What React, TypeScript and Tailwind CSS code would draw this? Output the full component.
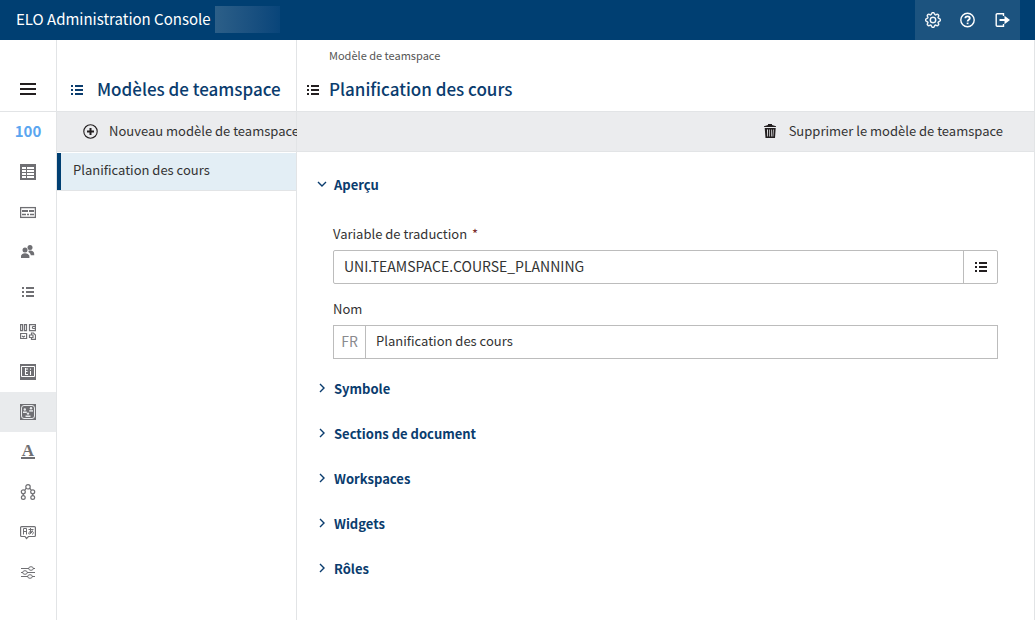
import { ReactNode, useState } from "react";
import { BsGear } from "react-icons/bs";
import clsx from "clsx";

function ListIcon() {
  return (
    <svg
      width="12"
      height="10"
      viewBox="0 0 12 10"
      fill="currentColor"
      shapeRendering="crispEdges"
      className="shrink-0"
      aria-hidden="true"
    >
      <path d="M0 0h2v2H0zM4 0h8v2H4zM0 4h2v2H0zM4 4h8v2H4zM0 8h2v2H0zM4 8h8v2H4z" />
    </svg>
  );
}

function NavSvg({ children }: { children: ReactNode }) {
  return (
    <svg
      width="16"
      height="16"
      viewBox="0 0 16 16"
      fill="none"
      stroke="currentColor"
      aria-hidden="true"
    >
      {children}
    </svg>
  );
}

function MenuIcon() {
  return (
    <svg
      width="16"
      height="12"
      viewBox="0 0 16 12"
      fill="currentColor"
      shapeRendering="crispEdges"
      aria-hidden="true"
    >
      <path d="M0 0h16v2H0zM0 5h16v2H0zM0 10h16v2H0z" />
    </svg>
  );
}

function TableIcon() {
  return (
    <NavSvg>
      <path
        fill="currentColor"
        stroke="none"
        fillRule="evenodd"
        d="M0 0h16v16H0zM2 3h4v2H2zM7 3h7v2H7zM2 6h4v2H2zM7 6h7v2H7zM2 9h4v2H2zM7 9h7v2H7zM2 12h4v2H2zM7 12h7v2H7z"
      />
    </NavSvg>
  );
}

function FieldsIcon() {
  return (
    <NavSvg>
      <rect x="0.6" y="3.6" width="14.8" height="9.8" strokeWidth="1.3" />
      <path strokeWidth="2" d="M2 7h6M9 7h5" />
      <path strokeWidth="1.6" d="M2 10.5h4M7 10.5h2M10 10.5h4" />
    </NavSvg>
  );
}

function UsersIcon() {
  return (
    <NavSvg>
      <g fill="currentColor" stroke="none">
        <circle cx="10" cy="3.4" r="2.5" />
        <path d="M8.6 6.8c3-.9 5.6.6 5.6 3v1.4h-3.4c-.3-1.4-1.2-2.5-2.5-3.1.3-.4.4-.8.3-1.3z" />
        <circle cx="5" cy="6" r="2.5" />
        <path d="M1 14v-1.5c0-2 1.7-3.3 4-3.3s4.4 1.3 4.4 3.3V14z" />
      </g>
    </NavSvg>
  );
}

function BlocksIcon() {
  return (
    <NavSvg>
      <g strokeWidth="1.2">
        <path d="M.6.6h2v6h-2zM4.5.6h2v6h-2zM9.5.6h5.9v6H9.5zM12.5 2.5h3M12.5 4.5h3M12.5 2.5v2" />
        <path d="M.6 9.5h6v5h-6zM2 12l1.5 1L5 12" />
        <path d="M11.5 11V9h2l2 2v4.4h-4v-2M13 11H9.5v2.5H13z" />
      </g>
    </NavSvg>
  );
}

function IndexIcon() {
  return (
    <NavSvg>
      <path fill="currentColor" stroke="none" d="M0 0h16v16H0z" />
      <path stroke="#fff" d="M1.5 2.5h13v10h-13z" />
      <path stroke="#fff" d="M5.5 4v7M6 5h2M6 7.5h1.5M6 10.5h2M10.5 7v4M10.5 4.5v1.3" />
    </NavSvg>
  );
}

function TeamspaceIcon() {
  return (
    <NavSvg>
      <path fill="currentColor" stroke="none" d="M0 0h16v16H0z" />
      <rect x="1.5" y="1.5" width="13" height="13" rx="2.5" stroke="#e9ebed" />
      <g fill="#e9ebed" stroke="none">
        <circle cx="4.8" cy="5.5" r="1.2" />
        <path d="M3 9V7.5h3.8V9z" />
        <circle cx="11" cy="4.2" r="1.2" />
        <path d="M9.2 7.6V6.2H13v1.4z" />
        <circle cx="8" cy="9.6" r="1.2" />
        <path d="M5.5 13v-1.5h5V13z" />
      </g>
    </NavSvg>
  );
}

function TreeIcon() {
  return (
    <NavSvg>
      <g strokeWidth="1.2">
        <circle cx="8" cy="2.8" r="2.2" />
        <circle cx="3.3" cy="7.8" r="2" />
        <circle cx="12.7" cy="7.8" r="2" />
        <circle cx="3.3" cy="13.5" r="1.9" />
        <circle cx="12.7" cy="13.5" r="1.9" />
        <path d="M6.3 4.2 4.8 6.2M9.7 4.2l1.5 2M3.3 9.8v1.7M12.7 9.8v1.7" />
      </g>
    </NavSvg>
  );
}

function TranslateIcon() {
  return (
    <NavSvg>
      <path
        strokeWidth="1.2"
        d="M1.6 2.6h12.8a1 1 0 0 1 1 1v7.900a1 1 0 0 1-1 1H8.500L6.500 14.500 5 12.500H1.600a1 1 0 0 1-1-1V3.600a1 1 0 0 1 1-1z"
      />
      <path d="M3.5 10.5v-6h3v6M3.5 7.5h3" />
      <path d="M8.5 5.5h5M10.5 4v5.5M12.5 6.500c-.5 2-2 3.500-3.300 3.500-1.200 0-.6-2.500 2-2.700 2.700-.2 2.800 2.600.8 3" />
    </NavSvg>
  );
}

function SlidersIcon() {
  return (
    <NavSvg>
      <path d="M1 4.5h8M13 4.5h2M1 8.5h2M7 8.5h8M1 12.5h7M12 12.5h3" />
      <ellipse cx="11" cy="4.5" rx="2.3" ry="1.8" />
      <ellipse cx="5" cy="8.5" rx="2.3" ry="1.8" />
      <ellipse cx="10" cy="12.5" rx="2.3" ry="1.8" />
    </NavSvg>
  );
}

function FontIcon() {
  return (
    <span className="w-[14px] border-b-2 border-current text-center font-['Liberation_Serif',serif] text-[17px] leading-[12px] font-bold">
      A
    </span>
  );
}

function HelpIcon() {
  return (
    <svg width="16" height="16" viewBox="0 0 16 16" fill="none" stroke="currentColor" aria-hidden="true">
      <circle cx="7.5" cy="8" r="6.7" strokeWidth="1.4" />
      <path strokeWidth="1.8" d="M5.3 6.3c0-2.7 4.5-2.6 4.500-.1 0 1.500-2.200 1.500-2.200 3.200" />
      <path strokeWidth="1.8" d="M7.6 10.6v1.6" />
    </svg>
  );
}

function LogoutIcon() {
  return (
    <svg width="16" height="16" viewBox="0 0 16 16" fill="none" stroke="currentColor" aria-hidden="true">
      <path strokeWidth="1.4" d="M8.5 4V1.700H2.200a1 1 0 0 0-1 1v10.600a1 1 0 0 0 1 1h6.300V12" />
      <path strokeWidth="2" d="M4.5 8h7" />
      <path fill="currentColor" stroke="none" d="M9.5 3.8 15 8l-5.5 4.2z" />
    </svg>
  );
}

function AddIcon() {
  return (
    <svg
      width="16"
      height="16"
      viewBox="0 0 16 16"
      fill="none"
      stroke="#231f20"
      className="shrink-0"
      aria-hidden="true"
    >
      <circle cx="8.5" cy="8.5" r="6.7" strokeWidth="1.1" />
      <path strokeWidth="2" d="M8.5 5v7M5 8.5h7" />
    </svg>
  );
}

function TrashIcon() {
  return (
    <svg width="14" height="14" viewBox="0 0 14 14" fill="#231f20" aria-hidden="true">
      <path d="M1 2.2 5 1V0h4v1l4 1.2V3H1z" />
      <path
        fillRule="evenodd"
        d="M1.7 4h11L12 14H2.5zM4 5.5l.3 7h.7v-7zM6 5.5v7h.7v-7zM8 5.5v7h.7v-7zM10 5.5l-.4 7h.7l.4-7z"
      />
    </svg>
  );
}

function Chevron({ open }: { open: boolean }) {
  return (
    <svg
      width="10"
      height="12"
      viewBox="0 0 10 12"
      fill="none"
      stroke="currentColor"
      strokeWidth="1.4"
      className="shrink-0"
      aria-hidden="true"
    >
      <path d={open ? "M1 3l4 4 4-4" : "M3 1l4 4-4 4"} />
    </svg>
  );
}

const navItems: { label: string; icon: ReactNode }[] = [
  {
    label: "100",
    icon: <span className="pb-0.5 text-[15px] leading-5 font-bold text-[#5aa5f0]">100</span>,
  },
  { label: "Masques", icon: <TableIcon /> },
  { label: "Champs", icon: <FieldsIcon /> },
  { label: "Utilisateurs", icon: <UsersIcon /> },
  { label: "Listes", icon: <ListIcon /> },
  { label: "Modules", icon: <BlocksIcon /> },
  { label: "Index", icon: <IndexIcon /> },
  { label: "Teamspaces", icon: <TeamspaceIcon /> },
  { label: "Polices", icon: <FontIcon /> },
  { label: "Structure", icon: <TreeIcon /> },
  { label: "Traductions", icon: <TranslateIcon /> },
  { label: "Options", icon: <SlidersIcon /> },
];

const sections = ["Symbole", "Sections de document", "Workspaces", "Widgets", "Rôles"];

function Section({
  title,
  defaultOpen = false,
  children,
}: {
  title: string;
  defaultOpen?: boolean;
  children?: ReactNode;
}) {
  const [open, setOpen] = useState(defaultOpen);

  return (
    <section>
      <button
        type="button"
        aria-expanded={open}
        onClick={() => setOpen(!open)}
        className="flex h-6 items-center gap-[7px] font-bold text-[#0a3c6e]"
      >
        <Chevron open={open} />
        {title}
      </button>
      {open && children}
    </section>
  );
}

export default function App() {
  const [selected, setSelected] = useState("Teamspaces");
  const [variable, setVariable] = useState("UNI.TEAMSPACE.COURSE_PLANNING");
  const [name, setName] = useState("Planification des cours");

  return (
    <div className="flex min-h-screen flex-col bg-white font-['Noto_Sans_CJK_SC',sans-serif] text-[13px] leading-5 text-[#333]">
      <header className="flex h-10 items-center justify-between bg-[#003f72] pr-[15px] pl-4 text-white">
        <div className="flex items-center gap-1 pb-0.5">
          <h1 className="text-[15px]">ELO Administration Console</h1>
          <div className="h-[27px] w-[65px] bg-linear-to-r from-[#2c5f88] to-[#08457a]" />
        </div>
        <div className="flex h-10 items-center bg-[#1c537f]">
          <button type="button" aria-label="Paramètres" className="flex h-10 w-[35px] items-center justify-center">
            <BsGear size={16} stroke="currentColor" strokeWidth={0.4} />
          </button>
          <button type="button" aria-label="Aide" className="flex h-10 w-[35px] items-center justify-center">
            <HelpIcon />
          </button>
          <button type="button" aria-label="Déconnexion" className="flex h-10 w-[35px] items-center justify-center">
            <LogoutIcon />
          </button>
        </div>
      </header>

      <div className="flex flex-1 border-r border-[#e2e4e6]">
        <nav className="w-[57px] shrink-0 border-r border-[#e2e4e6] text-[#6f6f73]">
          <button
            type="button"
            aria-label="Menu"
            className="flex h-[72px] w-full items-end justify-center border-b border-[#e2e4e6] pb-4 text-[#231f20]"
          >
            <MenuIcon />
          </button>
          {navItems.map((item) => (
            <button
              key={item.label}
              type="button"
              aria-label={item.label}
              onClick={() => setSelected(item.label)}
              className={clsx(
                "flex h-10 w-full items-center justify-center",
                item.label === selected && "bg-[#e9ebed]",
              )}
            >
              {item.icon}
            </button>
          ))}
        </nav>

        <aside className="w-[240px] shrink-0 border-r border-[#e2e4e6]">
          <div className="flex h-[71px] items-end gap-[14px] pb-[10px] pl-[14px] text-[#0a3c6e]">
            <div className="flex h-6 items-end pb-[6px]">
              <ListIcon />
            </div>
            <h2 className="text-[17px] leading-6 font-medium whitespace-nowrap">Modèles de teamspace</h2>
          </div>
          <div className="flex h-[41px] border-y border-[#e2e4e6] bg-[#ebecee] pl-[25px]">
            <button type="button" className="flex items-center gap-[11px] pb-px whitespace-nowrap">
              <AddIcon />
              Nouveau modèle de teamspace
            </button>
          </div>
          <ul className="pt-px">
            <li className="border-b border-[#e2e4e6]">
              <button
                type="button"
                className="flex h-[37px] w-full items-center border-l-4 border-[#003f72] bg-[#e3eef5] pb-1 pl-3"
              >
                Planification des cours
              </button>
            </li>
          </ul>
        </aside>

        <main className="min-w-0 flex-1">
          <div className="flex h-[71px] flex-col justify-end pb-[10px] pl-[10px]">
            <p className="mb-[14px] pl-[22px] text-[11px] leading-4 text-[#555]">Modèle de teamspace</p>
            <div className="flex items-end gap-[10px]">
              <div className="flex h-6 items-end pb-[6px] text-[#231f20]">
                <ListIcon />
              </div>
              <h2 className="text-[17px] leading-6 font-medium text-[#0a3c6e]">Planification des cours</h2>
            </div>
          </div>
          <div className="flex h-[41px] justify-end border-y border-[#e2e4e6] bg-[#ebecee] pr-[31px]">
            <button type="button" className="flex items-center gap-3 pb-px">
              <TrashIcon />
              Supprimer le modèle de teamspace
            </button>
          </div>

          <div className="px-5 py-[21px]">
            <Section title="Aperçu" defaultOpen>
              <div className="flex flex-col gap-[15px] px-4 pt-[27px]">
                <div className="flex flex-col gap-[6px]">
                  <label htmlFor="variable">
                    Variable de traduction <span className="ml-0.5 text-[#7a2a2a]">*</span>
                  </label>
                  <div className="flex h-[34px] rounded-xs border border-[#bcbcbc]">
                    <input
                      id="variable"
                      value={variable}
                      onChange={(e) => setVariable(e.target.value)}
                      className="min-w-0 flex-1 px-[10px] pb-0.5 text-[14px] outline-none"
                    />
                    <button
                      type="button"
                      aria-label="Choisir une variable"
                      className="flex w-[34px] items-center justify-center border-l border-[#bcbcbc] text-[#231f20]"
                    >
                      <ListIcon />
                    </button>
                  </div>
                </div>
                <div className="flex flex-col gap-[6px]">
                  <label htmlFor="name">Nom</label>
                  <div className="flex h-[34px] border border-[#bcbcbc]">
                    <span className="flex w-8 items-center justify-center border-r border-[#bcbcbc] pb-0.5 text-[14px] text-[#8a8a8e]">
                      FR
                    </span>
                    <input
                      id="name"
                      value={name}
                      onChange={(e) => setName(e.target.value)}
                      className="min-w-0 flex-1 px-[10px] pb-0.5 outline-none"
                    />
                  </div>
                </div>
              </div>
            </Section>
            <div className="mt-[18px] flex flex-col gap-[21px]">
              {sections.map((title) => (
                <Section key={title} title={title} />
              ))}
            </div>
          </div>
        </main>
      </div>
    </div>
  );
}
